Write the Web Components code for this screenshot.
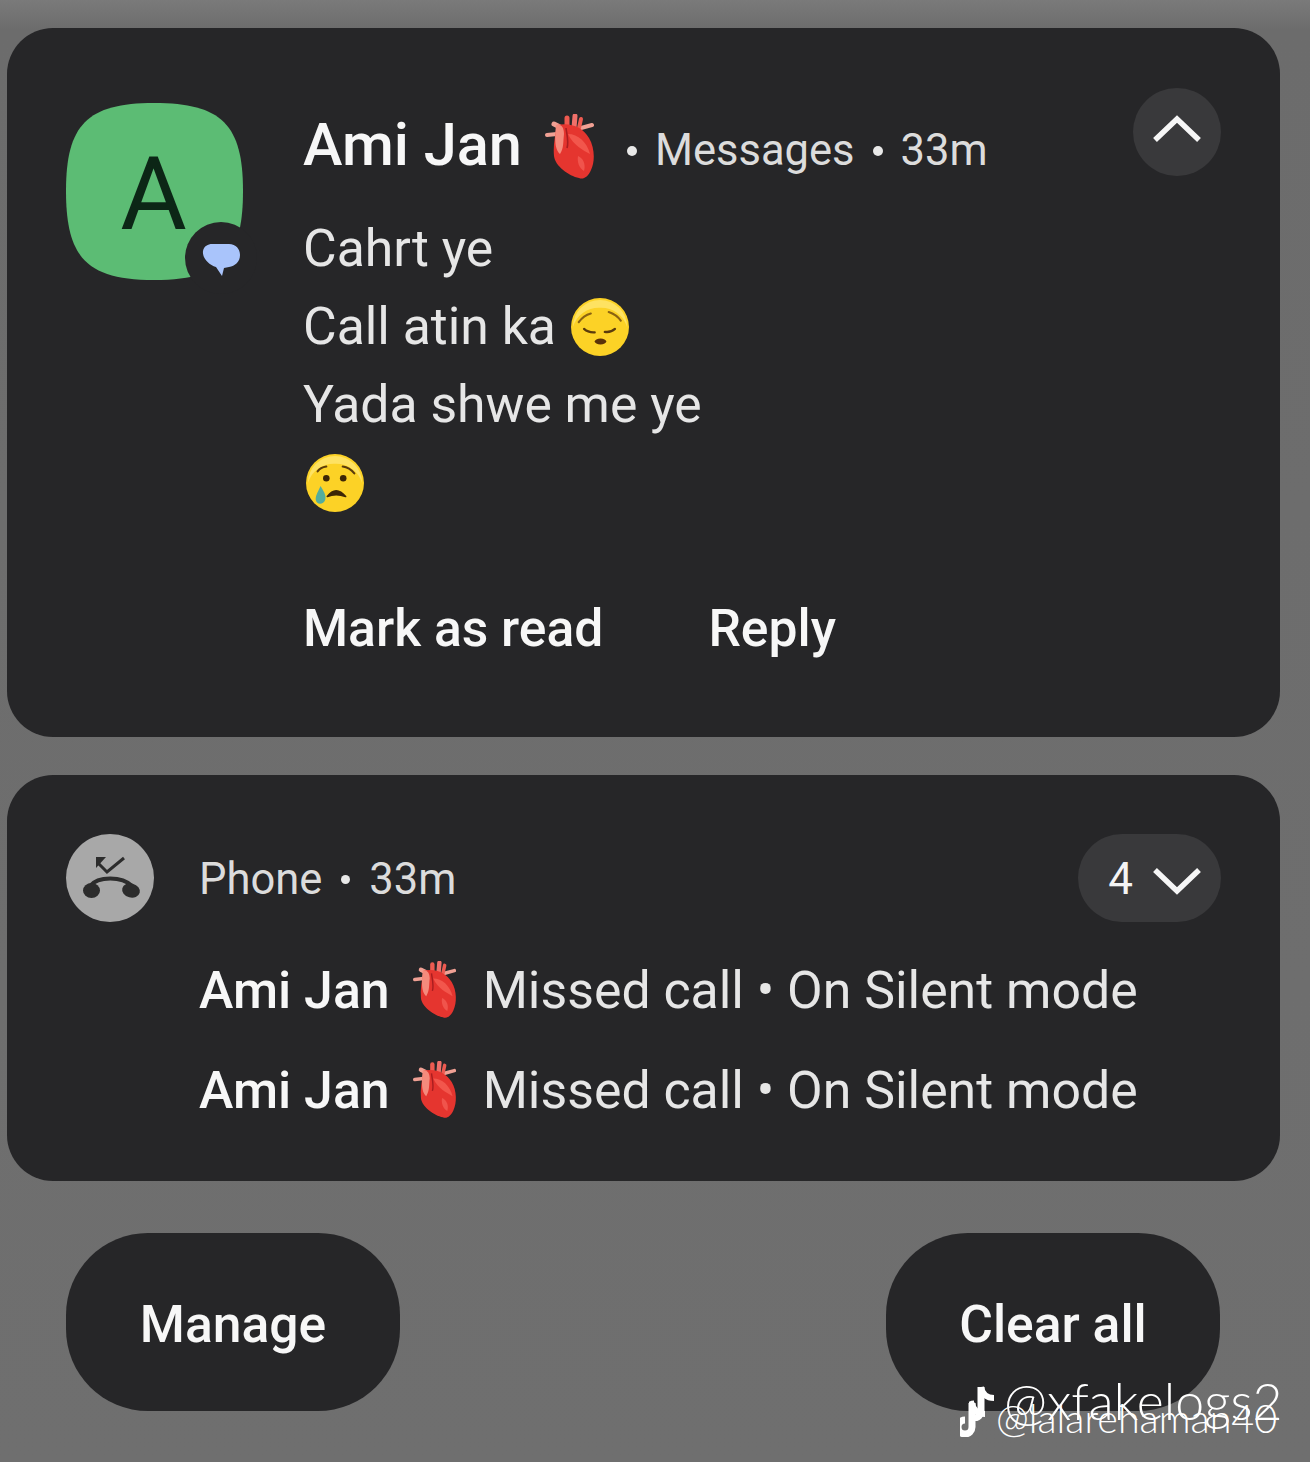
<!DOCTYPE html>
<html>
<head>
<meta charset="utf-8">
<style>
	html, body { margin: 0; background: #6f6f6f; }
	body { font-family: Roboto, "Liberation Sans", sans-serif; color: #f2f2f2; }
</style>
</head>
<body>
<notif-screen>
	<notif-card style="--pad-top: 60px; --pad-bottom: 69px;">
		<message-notif></message-notif>
	</notif-card>
	<notif-card style="--pad-top: 59px; --pad-bottom: 41px; margin-top: 38px;">
		<phone-notif></phone-notif>
	</notif-card>
	<footer-actions></footer-actions>
	<water-mark></water-mark>
</notif-screen>

<script>
class NotifScreen extends HTMLElement {
	constructor() {
		super();
		this.attachShadow({ mode: "open" }).innerHTML = `
			<style>
				:host { display: block; position: relative; height: 1462px; box-sizing: border-box; padding: 28px 30px 0 7px; overflow: hidden; background: linear-gradient(#7a7a7a 0, #6c6c6c 30px, #6f6f6f 100%); }
			</style>
			<slot></slot>`;
	}
}

class NotifCard extends HTMLElement {
	constructor() {
		super();
		this.attachShadow({ mode: "open" }).innerHTML = `
			<style>
				:host { display: block; box-sizing: border-box; background: #262628; border-radius: 46px; padding: var(--pad-top) 59px var(--pad-bottom) 59px; }
			</style>
			<slot></slot>`;
	}
}

class HeartIcon extends HTMLElement {
	constructor() {
		super();
		this.attachShadow({ mode: "open" }).innerHTML = `
			<style>
				:host { display: inline-block; width: var(--w, 50px); height: var(--h, 66px); flex: none; }
				svg { display: block; width: 100%; height: 100%; filter: blur(0.6px); }
			</style>
			<svg viewBox="0 0 50 66">
				<g fill="none" stroke-linecap="round">
					<path d="M2 21 L12 20" stroke="#f0a094" stroke-width="4"/>
					<path d="M9 10 L17 14" stroke="#f0a094" stroke-width="5"/>
					<path d="M47 11 L36 14" stroke="#f0a094" stroke-width="4"/>
					<path d="M22 4 L22 14" stroke="#ee5a50" stroke-width="5"/>
					<path d="M30 2 L29 14" stroke="#f0706a" stroke-width="5"/>
					<path d="M36 5 L34 14" stroke="#ee5a50" stroke-width="4"/>
				</g>
				<path d="M12 11 C25 8 38 13 44 24 C50 34 50 48 46 56 C43 63 38 66 34 64 C24 62 10 52 9 42 C8 32 10 22 12 11 Z" fill="#e5352f"/>
				<path d="M11 11 C16 10 19 13 19 20 C18 28 19 34 15 40 C11 36 9 30 11 11 Z" fill="#f58a7c"/>
				<path d="M23 20 C33 20 42 28 45 40 C38 36 29 32 23 20 Z" fill="#f2564c"/>
				<path d="M33 42 C38 44 41 50 39 57 C34 54 32 48 33 42 Z" fill="#f0544c"/>
				<path d="M21 14 C22 22 24 28 22 34" fill="none" stroke="#a81d1f" stroke-width="1.6"/>
			</svg>`;
	}
}

class FaceIcon extends HTMLElement {
	constructor() {
		super();
		const cry = this.getAttribute("kind") === "cry";
		const face = cry ? `
			<path d="M12 18 Q15 14 21 13 M38 13 Q45 14 50 20" fill="none" stroke="#5a3b0c" stroke-width="2.2" stroke-linecap="round"/>
			<circle cx="21" cy="25" r="3.4" fill="#3d2606"/>
			<circle cx="38.5" cy="25" r="3.4" fill="#3d2606"/>
			<path d="M22 44 Q31 32 41 44 Q31 40 22 44 Z" fill="#3d2606" stroke="#3d2606" stroke-width="1.6" stroke-linejoin="round"/>
			<path d="M15 33 C18 38 21 42 20 47 C18 53 11 53 10 47 C10 42 13 38 15 33 Z" fill="#54ad9c"/>` : `
			<path d="M8 25 Q13 18 20.5 16 M39 14.5 Q47 17 51.5 23.5" fill="none" stroke="#8a6212" stroke-width="2.2" stroke-linecap="round"/>
			<path d="M13.5 32 Q18 36 24.5 35.5 M35 35 Q41 36 45.5 32" fill="none" stroke="#5a3b0c" stroke-width="2.4" stroke-linecap="round"/>
			<ellipse cx="30.5" cy="45" rx="6" ry="3" fill="#5a3209"/>`;
		this.attachShadow({ mode: "open" }).innerHTML = `
			<style>
				:host { display: inline-block; width: 58px; height: 58px; flex: none; }
				svg { display: block; width: 100%; height: 100%; filter: blur(0.5px); }
			</style>
			<svg viewBox="0 0 60 60">
				<circle cx="30" cy="30" r="30" fill="#fcd226"/>
				<path d="M30 2 A28 28 0 0 1 58 30 A28 28 0 0 0 30 10 A28 28 0 0 0 2 30 A28 28 0 0 1 30 2 Z" fill="#fee262"/>
				${face}
			</svg>`;
	}
}

class MessageAvatar extends HTMLElement {
	constructor() {
		super();
		this.attachShadow({ mode: "open" }).innerHTML = `
			<style>
				:host { display: block; position: relative; width: 177px; height: 177px; }
				svg.shape { display: block; width: 177px; height: 177px; }
				span { position: absolute; left: 0; top: 0; width: 177px; line-height: 177px; text-align: center; font-size: 102px; font-weight: 400; color: #0c2616; margin-left: -1px; margin-top: 3px; }
				.badge { position: absolute; left: 119px; top: 119px; width: 72px; height: 72px; border-radius: 50%; background: #262628; }
				.badge svg { position: absolute; left: 17px; top: 21px; width: 38px; height: 34px; }
			</style>
			<svg class="shape" viewBox="0 0 177 177">
				<path d="M88 0 C156 0 177 22 177 88 C177 155 156 177 88 177 C21 177 0 155 0 88 C0 22 21 0 88 0 Z" fill="#5cbc74"/>
			</svg>
			<span>A</span>
			<div class="badge">
				<svg viewBox="0 0 38 34">
					<path d="M10 1 H27 C34 1 38 6 38 12 C38 19 33 23 27 24 L22 25 L20 33 L14 24 C7 22 0 15 1 8 C2 3 6 1 10 1 Z" fill="#a9c4fb"/>
				</svg>
			</div>`;
	}
}

class ExpandChip extends HTMLElement {
	constructor() {
		super();
		const up = this.getAttribute("dir") === "up";
		const count = this.getAttribute("count");
		this.attachShadow({ mode: "open" }).innerHTML = `
			<style>
				:host { display: inline-flex; align-items: center; justify-content: center; gap: 19px; box-sizing: border-box; height: 88px; min-width: 88px; padding: 0 19px 0 ${count ? 30 : 19}px; border-radius: 44px; background: #39393b; }
				span { font-size: 44px; color: #f4f4f4; margin-top: 2px; }
				svg { display: block; width: 50px; height: 32px; margin-top: ${up ? -6 : 4}px; }
			</style>
			${count ? `<span>${count}</span>` : ""}
			<svg viewBox="0 0 50 32">
				<path d="${up ? "M3 27 L25 6 L47 27" : "M3 6 L25 27 L47 6"}" fill="none" stroke="#f6f6f6" stroke-width="5.5" stroke-linejoin="miter"/>
			</svg>`;
	}
}

class MessageNotif extends HTMLElement {
	constructor() {
		super();
		this.attachShadow({ mode: "open" }).innerHTML = `
			<style>
				:host { display: grid; grid-template-columns: 177px 1fr 88px; column-gap: 60px; position: relative; }
				.avatar { padding-top: 15px; }
				.main { grid-column: 2 / 4; grid-row: 1; padding-top: 15px; }
				.chip { grid-column: 3; grid-row: 1; justify-self: end; z-index: 1; }
				.head { display: flex; align-items: center; height: 88px; }
				.name { font-size: 59.5px; font-weight: 500; color: #f7f7f7; margin-top: -5px; }
				.head heart-icon { margin-left: 22px; --w: 52px; --h: 66px; }
				.meta { display: flex; align-items: center; font-size: 43.5px; color: #dcdcdc; margin-left: 31px; margin-top: 7px; white-space: pre; }
				.dot { width: 10px; height: 10px; border-radius: 50%; background: #e8e8e8; margin: 0 18px 0 18px; }
				.dot:first-child { margin-left: 0; }
				.body { margin-top: 19px; font-size: 51.7px; line-height: 78px; color: #e6e6e6; }
				.line { display: flex; align-items: center; height: 78px; gap: 15px; }
				.line .solo { margin-left: 3px; }
				.actions { display: flex; gap: 105px; margin-top: 68px; line-height: 78px; font-size: 51.6px; font-weight: 500; color: #f7f7f7; }
			</style>
			<div class="avatar"><message-avatar></message-avatar></div>
			<div class="main">
				<div class="head">
					<span class="name">Ami Jan</span>
					<heart-icon></heart-icon>
					<span class="meta"><i class="dot"></i>Messages<i class="dot"></i>33m</span>
				</div>
				<div class="body">
					<div class="line">Cahrt ye</div>
					<div class="line">Call atin ka <face-icon kind="pensive"></face-icon></div>
					<div class="line">Yada shwe me ye</div>
					<div class="line"><face-icon class="solo" kind="cry"></face-icon></div>
				</div>
				<div class="actions"><span>Mark as read</span><span>Reply</span></div>
			</div>
			<div class="chip"><expand-chip dir="up"></expand-chip></div>`;
	}
}

class PhoneNotif extends HTMLElement {
	constructor() {
		super();
		const row = `
			<div class="row">
				<span class="name">Ami Jan</span>
				<heart-icon></heart-icon>
				<span class="text">Missed call • On Silent mode</span>
			</div>`;
		this.attachShadow({ mode: "open" }).innerHTML = `
			<style>
				:host { display: block; }
				.top { display: flex; align-items: center; height: 88px; }
				.icon { width: 88px; height: 88px; flex: none; display: block; }
				.title { display: flex; align-items: center; font-size: 43.5px; color: #dcdcdc; margin-left: 45px; margin-top: 2px; flex: 1; white-space: pre; }
				.dot { width: 9px; height: 9px; border-radius: 50%; background: #e8e8e8; margin: 0 19px; }
				.rows { padding-left: 133px; margin-top: 18px; }
				.row { display: flex; align-items: center; height: 100px; font-size: 51.8px; }
				.name { font-weight: 500; color: #f7f7f7; }
				.row heart-icon { margin-left: 22px; --w: 46px; --h: 58px; }
				.text { margin-left: 25px; color: #e6e6e6; white-space: pre; }
			</style>
			<div class="top">
				<svg class="icon" viewBox="0 0 88 88">
					<circle cx="44" cy="44" r="44" fill="#a8a8a8"/>
					<path d="M30 23 H40 L30 34 Z" fill="#2c2c2c"/>
					<path d="M31 28 L41 38 L58 24" fill="none" stroke="#2c2c2c" stroke-width="3"/>
					<path d="M24 52 C32 42 56 42 66 52" fill="none" stroke="#2c2c2c" stroke-width="4"/>
					<ellipse cx="25.5" cy="56.5" rx="8.5" ry="7.5" fill="#2c2c2c"/>
					<ellipse cx="65" cy="56.5" rx="9" ry="7" fill="#2c2c2c" transform="rotate(15 65 56.5)"/>
				</svg>
				<span class="title">Phone<i class="dot"></i>33m</span>
				<expand-chip dir="down" count="4"></expand-chip>
			</div>
			<div class="rows">${row}${row}</div>`;
	}
}

class PillButton extends HTMLElement {
	constructor() {
		super();
		this.attachShadow({ mode: "open" }).innerHTML = `
			<style>
				:host { display: flex; align-items: center; justify-content: center; width: 334px; height: 178px; background: #262628; border-radius: 82px; font-size: 51.6px; font-weight: 500; color: #f7f7f7; }
				span { margin-top: 4px; }
			</style>
			<span><slot></slot></span>`;
	}
}

class FooterActions extends HTMLElement {
	constructor() {
		super();
		this.attachShadow({ mode: "open" }).innerHTML = `
			<style>
				:host { display: flex; justify-content: space-between; margin-top: 52px; padding: 0 60px 0 59px; }
			</style>
			<pill-button>Manage</pill-button>
			<pill-button>Clear all</pill-button>`;
	}
}

class WaterMark extends HTMLElement {
	constructor() {
		super();
		const note = `
			<path d="M12 2 V26 a7 7 0 1 1 -7 -7" fill="none" stroke="#fff" stroke-width="7"/>
			<path d="M12 2 C13 9 18 13 25 13" fill="none" stroke="#fff" stroke-width="6"/>`;
		this.attachShadow({ mode: "open" }).innerHTML = `
			<style>
				:host { position: absolute; left: 0; top: 0; width: 0; height: 0; font-family: Lato, sans-serif; font-weight: 300; color: #fff; }
				span { position: absolute; white-space: nowrap; line-height: 50px; }
				.a { left: 1004px; top: 1375px; font-size: 51.8px; }
				.b { left: 996px; top: 1393px; font-size: 39.5px; }
				svg { position: absolute; }
			</style>
			<svg style="left:960px;top:1401px" width="30" height="36" viewBox="0 0 30 36">${note}</svg>
			<svg style="left:969px;top:1385px" width="30" height="36" viewBox="0 0 30 36">${note}</svg>
			<span class="a">@xfakelogs2</span>
			<span class="b">@lalarehaman40</span>`;
	}
}

customElements.define("notif-screen", NotifScreen);
customElements.define("notif-card", NotifCard);
customElements.define("heart-icon", HeartIcon);
customElements.define("face-icon", FaceIcon);
customElements.define("message-avatar", MessageAvatar);
customElements.define("expand-chip", ExpandChip);
customElements.define("message-notif", MessageNotif);
customElements.define("phone-notif", PhoneNotif);
customElements.define("pill-button", PillButton);
customElements.define("footer-actions", FooterActions);
customElements.define("water-mark", WaterMark);
</script>
</body>
</html>
